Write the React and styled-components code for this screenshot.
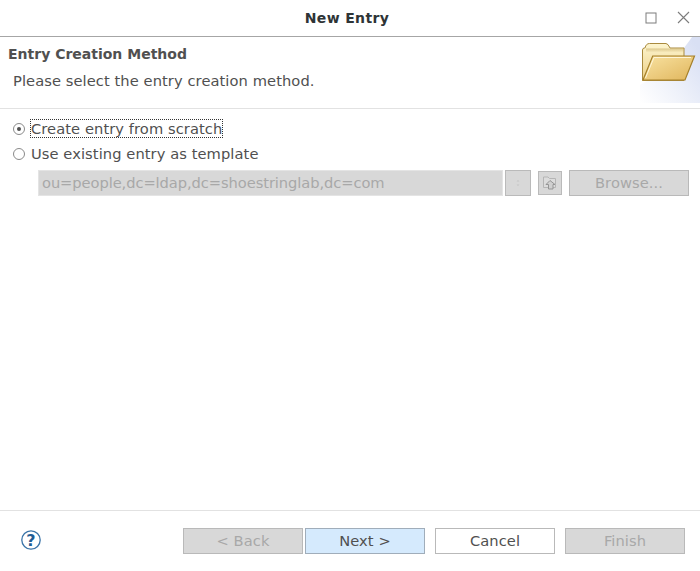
import React from "react";
import styled, { createGlobalStyle } from "styled-components";

const Global = createGlobalStyle`
   html, body {
      margin: 0;
      padding: 0;
      background: #fff;
   }
   body {
      font-family: "DejaVu Sans", sans-serif;
      font-size: 14.67px;
      letter-spacing: 0.08px;
      color: #505050;
   }
`;

const Dialog = styled.div`
   width: 700px;
   height: 571px;
   display: flex;
   flex-direction: column;
   background: #fff;
   overflow: hidden;
`;

const TitleBar = styled.div`
   height: 36px;
   flex: none;
   display: flex;
   align-items: center;
   border-bottom: 1px solid #a6a6a6;
   padding-right: 10px;
`;

const Title = styled.div`
   flex: 1;
   padding-left: 49px;
   text-align: center;
   font-size: 14px;
   font-weight: bold;
   letter-spacing: 0.35px;
   color: #2e3436;
`;

const WinButtons = styled.div`
   display: flex;
   gap: 20px;
   align-items: center;
   margin-top: -1px;
`;

const Banner = styled.div`
   height: 71px;
   flex: none;
   display: flex;
   justify-content: space-between;
   border-bottom: 1px solid #e2e2e2;
`;

const BannerText = styled.div`
   padding: 8px 0 0 8px;
`;

const BannerTitle = styled.div`
   font-size: 14px;
   font-weight: bold;
   letter-spacing: 0;
   line-height: 18px;
`;

const BannerDesc = styled.div`
   margin: 9px 0 0 5px;
   line-height: 18px;
`;

const Body = styled.div`
   flex: 1;
   display: flex;
   flex-direction: column;
   padding: 10px 11px 0 13px;
`;

const RadioRow = styled.div`
   height: 19px;
   display: flex;
   align-items: center;
   gap: 5px;
   margin-bottom: ${(p) => p.$gap || 6}px;
`;

const RadioCircle = styled.span`
   width: 12px;
   height: 12px;
   flex: none;
   box-sizing: border-box;
   border: 1px solid #8a8a8a;
   border-radius: 50%;
   background: #fff;
   display: flex;
   align-items: center;
   justify-content: center;

   &::after {
      content: "";
      display: ${(p) => (p.$checked ? "block" : "none")};
      width: 4px;
      height: 4px;
      border-radius: 50%;
      background: #505050;
   }
`;

const RadioLabel = styled.span`
   line-height: 17px;
   margin-left: ${(p) => (p.$focus ? "0" : "1px")};
   border: ${(p) => (p.$focus ? "1px dotted #333" : "none")};
   white-space: nowrap;
`;

const FieldRow = styled.div`
   display: flex;
   align-items: center;
   margin-left: 25px;
`;

const DisabledInput = styled.div`
   width: 465px;
   height: 26px;
   box-sizing: border-box;
   background: #d8d8d8;
   border: 1px solid #e4e4e4;
   color: #a8a8a8;
   line-height: 24px;
   padding-left: 3px;
   letter-spacing: -0.07px;
   white-space: nowrap;
`;

const SmallButton = styled.div`
   width: ${(p) => p.$size}px;
   height: ${(p) => p.$size}px;
   margin-left: ${(p) => p.$left}px;
   box-sizing: border-box;
   flex: none;
   background: #d8d8d8;
   border: 1px solid #bababa;
   display: flex;
   align-items: center;
   justify-content: center;
`;

const Button = styled.div`
   width: 120px;
   height: 26px;
   box-sizing: border-box;
   flex: none;
   display: flex;
   align-items: center;
   justify-content: center;
   padding-bottom: 2px;
   margin-left: ${(p) => p.$left || 0}px;
   border: 1px solid ${(p) => (p.$primary ? "#a0adba" : "#b9b9b9")};
   background: ${(p) => (p.$primary ? "#d5eafd" : p.$disabled ? "#d8d8d8" : "#fff")};
   color: ${(p) => (p.$disabled ? "#a8a8a8" : "#505050")};
   white-space: nowrap;
`;

const Footer = styled.div`
   height: 61px;
   box-sizing: border-box;
   flex: none;
   display: flex;
   align-items: flex-start;
   border-top: 1px solid #e2e2e2;
   padding: 17px 15px 0 21px;
`;

const HelpSlot = styled.div`
   width: 162px;
   flex: none;
   height: 24px;
   display: flex;
   align-items: center;
`;

const WinIcons = () => (
   <WinButtons>
      <svg width="12" height="12" viewBox="0 0 12 12">
         <rect x="1" y="1" width="10" height="10" fill="none" stroke="#7c7c7c" />
      </svg>
      <svg width="13" height="13" viewBox="0 0 13 13">
         <path d="M1 1 L12 12 M12 1 L1 12" stroke="#7c7c7c" strokeWidth="1.1" fill="none" />
      </svg>
   </WinButtons>
);

const BannerImage = () => (
   <svg width="60" height="66" viewBox="0 0 60 66">
      <defs>
         <linearGradient id="wash" x1="0" y1="1" x2="1" y2="0.2">
            <stop offset="0" stopColor="#ffffff" />
            <stop offset="0.45" stopColor="#eff2fa" />
            <stop offset="1" stopColor="#d9e0f4" />
         </linearGradient>
         <linearGradient id="back" x1="0" y1="0" x2="0" y2="1">
            <stop offset="0" stopColor="#fdf5cf" />
            <stop offset="1" stopColor="#eccf85" />
         </linearGradient>
         <linearGradient id="band" x1="0" y1="0" x2="0" y2="1">
            <stop offset="0" stopColor="#c7ac66" stopOpacity="0.6" />
            <stop offset="1" stopColor="#c7ac66" stopOpacity="0" />
         </linearGradient>
         <linearGradient id="front" x1="0" y1="0" x2="1" y2="1">
            <stop offset="0" stopColor="#f9e3a2" />
            <stop offset="1" stopColor="#e0b55c" />
         </linearGradient>
      </defs>
      <path d="M0 66 L0 48 C16 40 42 16 52 0 L60 0 L60 66 Z" fill="url(#wash)" />
      <path
         d="M2.5 43.5 L2.5 13 Q2.5 11 4.5 11 L5 11 Q6 6.5 9.5 6.5 L26 6.5 Q28 6.5 30 11 L44 11 L44 43.5 Z"
         fill="url(#back)"
         stroke="#a98a3e"
         strokeWidth="1"
      />
      <path d="M6 11.5 L43.5 11.5 L43.5 15.5 L6 15.5 Z" fill="url(#band)" />
      <path d="M3 43 L12.7 19 L54.5 19 L45 43 Z" fill="url(#front)" stroke="#a5802a" strokeWidth="1.2" />
      <path d="M5.5 41 L14 20.5 L51 20.5" fill="none" stroke="#fff6d8" strokeWidth="1" />
   </svg>
);

const SpinnerDots = () => (
   <svg width="6" height="8" viewBox="0 0 6 8">
      <path d="M3 1 L4.5 2.5 L1.5 2.5 Z M3 7 L4.5 5.5 L1.5 5.5 Z" fill="#c4c4c4" />
   </svg>
);

const BrowseTreeIcon = () => (
   <svg width="16" height="16" viewBox="0 0 16 16">
      <path d="M1.5 12.5 L1.5 2 L6 2 L7.5 3.5 L13.5 3.5 L13.5 12.5 Z" fill="#dcdcdc" stroke="#b5b5b5" />
      <path d="M8 5.5 L4 9.5 L6.5 9.5 L6.5 14 L11 14 L11 9.5 L13 9.5 Z" fill="#d0d0d0" stroke="#959595" />
   </svg>
);

const HelpIcon = () => (
   <svg width="20" height="20" viewBox="0 0 20 20">
      <circle cx="10" cy="10" r="9.2" fill="#fff" stroke="#3a74a8" strokeWidth="1.3" />
      <text
         x="10"
         y="15.6"
         textAnchor="middle"
         fontFamily="DejaVu Sans"
         fontWeight="bold"
         fontSize="16"
         fill="#1f5c95"
      >
         ?
      </text>
   </svg>
);

const App = () => {
   return (
      <Dialog>
         <Global />
         <TitleBar>
            <Title>New Entry</Title>
            <WinIcons />
         </TitleBar>
         <Banner>
            <BannerText>
               <BannerTitle>Entry Creation Method</BannerTitle>
               <BannerDesc>Please select the entry creation method.</BannerDesc>
            </BannerText>
            <BannerImage />
         </Banner>
         <Body>
            <RadioRow>
               <RadioCircle $checked />
               <RadioLabel $focus>Create entry from scratch</RadioLabel>
            </RadioRow>
            <RadioRow $gap={7}>
               <RadioCircle />
               <RadioLabel>Use existing entry as template</RadioLabel>
            </RadioRow>
            <FieldRow>
               <DisabledInput>ou=people,dc=ldap,dc=shoestringlab,dc=com</DisabledInput>
               <SmallButton $size={26} $left={2}>
                  <SpinnerDots />
               </SmallButton>
               <SmallButton $size={24} $left={7}>
                  <BrowseTreeIcon />
               </SmallButton>
               <Button $disabled $left={7}>
                  Browse...
               </Button>
            </FieldRow>
         </Body>
         <Footer>
            <HelpSlot>
               <HelpIcon />
            </HelpSlot>
            <Button $disabled>&lt; Back</Button>
            <Button $primary $left={2}>
               Next &gt;
            </Button>
            <Button $left={10}>Cancel</Button>
            <Button $disabled $left={10}>
               Finish
            </Button>
         </Footer>
      </Dialog>
   );
};

export default App;
